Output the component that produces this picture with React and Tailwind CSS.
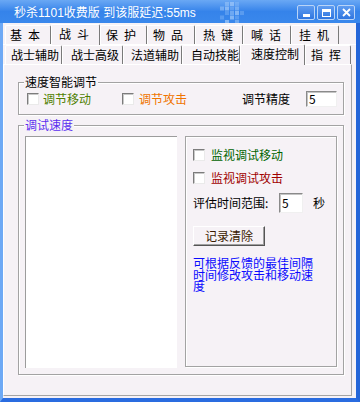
import React from 'react';

const BG = 'bg-[#f6f2f6]';

const row1 = [
  { label: '基\u2002本', w: 'w-[46px]', pl: 'pl-[4px]' },
  { label: '战\u2002斗', w: 'w-[49px]', pl: 'pl-[7px]', sel: true },
  { label: '保\u2002护', w: 'w-[47px]', pl: 'pl-[5px]' },
  { label: '物\u2002品', w: 'w-[48px]', pl: 'pl-[5px]' },
  { label: '热\u2002键', w: 'w-[48px]', pl: 'pl-[7px]' },
  { label: '喊\u2002话', w: 'w-[48px]', pl: 'pl-[7px]' },
  { label: '挂\u2002机', w: 'w-[48px]', pl: 'pl-[7px]' },
];

const row2 = [
  { label: '战士辅助', w: 'w-[57px]', pl: 'pl-[5px]' },
  { label: '战士高级', w: 'w-[61px]', pl: 'pl-[8px]' },
  { label: '法道辅助', w: 'w-[59px]', pl: 'pl-[7px]' },
  { label: '自动技能', w: 'w-[58px]', pl: 'pl-[8px]' },
  { label: '速度控制', w: 'w-[65px]', pl: 'pl-[10px]', sel: true },
  { label: '指\u2002挥', w: 'w-[46px]', pl: 'pl-[5px]' },
];

const Tab = ({ tab, h, selH }) => (
  <div
    className={`${tab.w} ${tab.pl} ${tab.sel ? `${selH} -mb-px relative z-10 ${BG} items-start pt-[3px]` : `${h} items-center`} flex shrink-0 border-t border-l border-white border-r border-r-[#7a7a7a] rounded-t-[2px] text-[12px] leading-[12px] text-black whitespace-nowrap`}
  >
    {tab.label}
  </div>
);

const Check = () => (
  <div className="w-[12px] h-[12px] shrink-0 bg-white border border-t-[#7c7c7c] border-l-[#7c7c7c] border-r-[#eaeaea] border-b-[#eaeaea] shadow-[inset_1px_1px_0_#c8c8c8]" />
);

const Field = ({ value, w, h }) => (
  <div className={`${w} ${h} shrink-0 bg-white border border-t-[#8a8a8a] border-l-[#8a8a8a] border-r-[#f0f0f0] border-b-[#f0f0f0] shadow-[inset_1px_1px_0_#c4c4c4] flex items-center pl-[2px] text-[12px] leading-[12px] text-black`}>
    {value}
  </div>
);

const TitleButton = ({ children }) => (
  <div className="w-[18px] h-[15px] rounded-[2px] border border-[#b9d4f7] bg-gradient-to-b from-[#5f9cf0] to-[#2f76e0] flex items-center justify-center">
    {children}
  </div>
);

const Squares = () => {
  const cells = [
    [1, 0], [2, 0], [3, 0],
    [0, 1], [1, 1], [2, 1], [3, 1],
    [1, 2], [2, 2], [3, 2], [4, 2],
    [0, 3], [2, 3], [3, 3],
    [1, 4], [3, 4],
  ];
  return (
    <svg width="26" height="22" viewBox="0 0 26 22" className="shrink-0">
      {cells.map(([c, r], i) => (
        <rect key={i} x={c * 5} y={r * 4.5} width="4" height="4" fill="#9cc6f8" opacity={0.35 + ((c + r) % 3) * 0.2} />
      ))}
    </svg>
  );
};

export default function App() {
  return (
    <div className="w-[360px] h-[402px] flex flex-col overflow-hidden [font-family:'Noto_Sans_CJK_SC',sans-serif] bg-[#2c72de]">
      {/* title bar */}
      <div className="h-[23px] shrink-0 flex items-start bg-gradient-to-b from-[#6aa8f4] via-[#3583ea] to-[#3a88ec]">
        <div className="w-[220px] shrink-0 pl-[14px] pt-[7px] text-white text-[12px] leading-[12px] whitespace-nowrap [font-family:'Liberation_Sans','Noto_Sans_CJK_SC',sans-serif]">
          秒杀1101收费版&nbsp;到该服延迟:55ms
        </div>
        <div className="mt-[2px]">
          <Squares />
        </div>
        <div className="ml-auto mr-[5px] mt-[5px] flex gap-[2px]">
          <TitleButton>
            <div className="w-[7px] h-[3px] bg-white mt-[6px]" />
          </TitleButton>
          <TitleButton>
            <div className="w-[9px] h-[8px] border border-white border-t-[3px]" />
          </TitleButton>
          <TitleButton>
            <svg width="9" height="9" viewBox="0 0 9 9">
              <path d="M1 1 L8 8 M8 1 L1 8" stroke="#fff" strokeWidth="1.8" />
            </svg>
          </TitleButton>
        </div>
      </div>

      {/* body */}
      <div className={`flex-1 flex flex-col ${BG} border-l-[3px] border-l-[#6ea9f5] border-r-[4px] border-r-[#2566d8] border-b-[4px] border-b-[#2a6ce0]`}>
        <div className="h-[21px] shrink-0 flex items-end pl-[2px]">
          {row1.map((t) => (
            <Tab key={t.label} tab={t} h="h-[19px]" selH="h-[21px]" />
          ))}
        </div>
        <div className="h-[20px] shrink-0 flex items-end pl-[2px] border-t border-white">
          {row2.map((t) => (
            <Tab key={t.label} tab={t} h="h-[19px]" selH="h-[21px]" />
          ))}
        </div>

        {/* panel */}
        <div className="w-[349px] h-[332px] shrink-0 border-t border-l border-white border-r border-r-[#a5a5a5] border-b border-b-[#a5a5a5] flex flex-col">
          {/* 速度智能调节 */}
          <div className="relative ml-[14px] mt-[17px] w-[326px] h-[33px] border border-[#a3a3a3] shadow-[inset_1px_1px_0_#fff,1px_1px_0_#fff] flex items-center pl-[8px] pt-[1px]">
            <div className={`absolute -top-[7px] left-[5px] px-[1px] ${BG} text-[12px] leading-[12px] text-black`}>
              速度智能调节
            </div>
            <Check />
            <span className="ml-[4px] w-[48px] text-[12px] leading-[12px] text-[#4f7f00] whitespace-nowrap">调节移动</span>
            <div className="ml-[31px]">
              <Check />
            </div>
            <span className="ml-[5px] w-[48px] text-[12px] leading-[12px] text-[#f07400] whitespace-nowrap">调节攻击</span>
            <span className="ml-[55px] w-[48px] text-[12px] leading-[12px] text-black whitespace-nowrap">调节精度</span>
            <div className="ml-[16px]">
              <Field value="5" w="w-[31px]" h="h-[16px]" />
            </div>
          </div>

          {/* 调试速度 */}
          <div className="relative ml-[14px] mt-[10px] w-[326px] h-[250px] border border-[#a3a3a3] shadow-[inset_1px_1px_0_#fff,1px_1px_0_#fff] flex items-start pl-[6px] pt-[10px]">
            <div className={`absolute -top-[7px] left-[5px] px-[1px] ${BG} text-[12px] leading-[12px] text-[#5b2ff0]`}>
              调试速度
            </div>
            <div className="w-[152px] h-[232px] shrink-0 bg-white border-t border-l border-[#9c9c9c]" />
            <div className="ml-[8px] w-[152px] h-[231px] shrink-0 border border-[#a3a3a3] shadow-[inset_1px_1px_0_#fff,1px_1px_0_#fff] flex flex-col pl-[7px] pt-[12px] text-[12px] leading-[12px]">
              <div className="flex items-center">
                <Check />
                <span className="ml-[6px] text-[#006400] whitespace-nowrap">监视调试移动</span>
              </div>
              <div className="flex items-center mt-[11px]">
                <Check />
                <span className="ml-[6px] text-[#a00000] whitespace-nowrap">监视调试攻击</span>
              </div>
              <div className="flex items-center mt-[9px]">
                <span className="text-black whitespace-nowrap w-[86px]">评估时间范围:</span>
                <Field value="5" w="w-[24px]" h="h-[20px]" />
                <span className="ml-[10px] text-black">秒</span>
              </div>
              <div className="mt-[13px] w-[72px] h-[20px] border border-t-white border-l-white border-r-[#555] border-b-[#555] shadow-[inset_-1px_-1px_0_#a0a0a0] flex items-center justify-center text-[#3a1a00] text-[12px] leading-[12px]">
                记录清除
              </div>
              <div className="mt-[11px] w-[124px] text-[#0a0aff] text-[12px] leading-[11.5px]">
                可根据反馈的最佳间隔时间修改攻击和移动速度
              </div>
            </div>
          </div>
        </div>
      </div>
    </div>
  );
}
